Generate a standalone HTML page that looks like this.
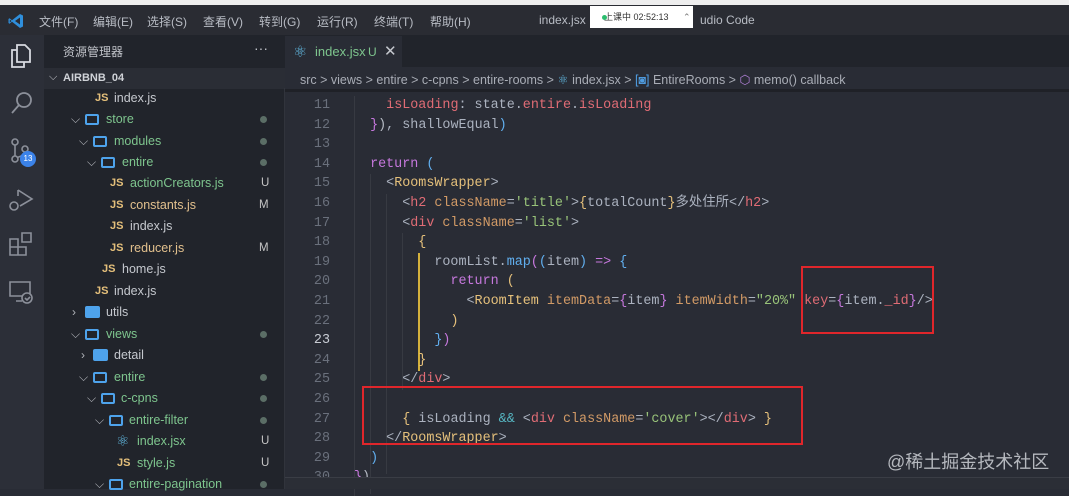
<!DOCTYPE html>
<html><head><meta charset="utf-8"><style>
*{margin:0;padding:0;box-sizing:border-box}
body{width:1069px;height:489px;overflow:hidden;background:#292c35;font-family:"Liberation Sans","Noto Sans CJK SC",sans-serif;position:relative}
.a{position:absolute;white-space:nowrap}
#top{left:0;top:0;width:1069px;height:6px;background:#eeeeee}
#title{left:0;top:5px;width:1069px;height:30px;background:#2a2c33;color:#b8bcc4;font-size:12px}
#act{left:0;top:35px;width:44px;height:454px;background:#2c2f38}
#side{left:44px;top:35px;width:241px;height:454px;background:#21242b;font-size:12.5px;color:#c5c8ce}
#tabs{left:285px;top:35px;width:784px;height:32px;background:#21242b}
#tab{left:285px;top:36px;width:117px;height:32px;background:#292c35}
#crumb{left:285px;top:67px;width:784px;height:22px;background:#292c35;color:#a9adb6;font-size:12.5px}
.r{position:absolute;left:0;height:21px;line-height:21px;font-size:12.5px}
.g{color:#7ec58e}.m{color:#e2c08d}
.js{color:#e5c07b;font-weight:bold;font-size:11px;position:absolute}
.fold{position:absolute;width:14px;height:11px;border:2px solid #4ea3ec;border-radius:2px}
.foldc{position:absolute;width:15px;height:12px;background:#4ea3ec;border-radius:2px}
.chev{position:absolute;color:#b0b3b9;font-size:12px}
.dot{position:absolute;left:260px;top:7px;width:7px;height:7px;border-radius:50%;background:#5b6e66}
.bd{position:absolute;left:216px;font-size:11.5px;color:#c5c5c5}
#code{left:285px;top:96px;font-family:"Liberation Mono","Noto Sans CJK SC",monospace;font-size:13.4px}
.l{position:absolute;left:0;height:19.6px;line-height:19.6px;white-space:pre}
.n{position:absolute;width:45px;text-align:right;color:#6a707c;left:0}
.c{position:absolute;left:69px;color:#abb2bf}
.p{color:#e06c75}.k{color:#c678dd}.y{color:#e5c07b}.o{color:#d19a66}.s{color:#98c379}.b{color:#61afef}.q{color:#56b6c2}.w{color:#b7bcc6}
.box{position:absolute;border:2.5px solid #e0262b}
</style></head><body>
<div class="a" id="top"></div>
<div class="a" id="title">
 <svg class="a" style="left:8px;top:8px" width="16" height="16" viewBox="0 0 16 16"><path d="M12 1 L15 2.5 V13.5 L12 15 L4 8.8 L1.5 10.8 L0.5 10 V6 L1.5 5.2 L4 7.2Z M12 4.5 L7 8 L12 11.5Z M1.8 6.5V9.5L3.5 8Z" fill="#2f8fdc" fill-rule="evenodd"/></svg>
 <span class="a" style="left:39px;top:8px">文件(F)</span>
 <span class="a" style="left:93px;top:8px">编辑(E)</span>
 <span class="a" style="left:147px;top:8px">选择(S)</span>
 <span class="a" style="left:203px;top:8px">查看(V)</span>
 <span class="a" style="left:259px;top:8px">转到(G)</span>
 <span class="a" style="left:317px;top:8px">运行(R)</span>
 <span class="a" style="left:374px;top:8px">终端(T)</span>
 <span class="a" style="left:430px;top:8px">帮助(H)</span>
 <span class="a" style="left:539px;top:8px">index.jsx</span>
 <span class="a" style="left:700px;top:8px">udio Code</span>
 <div class="a" style="left:590px;top:1px;width:103px;height:22px;background:#fff;color:#333;font-size:9px;line-height:22px;padding-left:14px">上课中 02:52:13 <span style="margin-left:12px;color:#777">⌃</span></div>
 <div class="a" style="left:602px;top:10px;width:5px;height:5px;border-radius:50%;background:#2bbd6e"></div>
</div>
<div class="a" id="act">
 <svg class="a" style="left:9px;top:8px" width="24" height="26" viewBox="0 0 24 26" fill="none" stroke="#d7dae0" stroke-width="1.8"><path d="M8 2h8l5 5v12H8z"/><path d="M8 7H3v17h12v-5"/></svg>
 <svg class="a" style="left:10px;top:56px" width="24" height="24" viewBox="0 0 24 24" fill="none" stroke="#8c909a" stroke-width="1.8"><circle cx="14" cy="9" r="7"/><path d="M9 14L2 22"/></svg>
 <svg class="a" style="left:9px;top:102px" width="26" height="28" viewBox="0 0 26 28" fill="none" stroke="#8c909a" stroke-width="1.6"><circle cx="6" cy="5" r="3"/><circle cx="6" cy="22" r="3"/><circle cx="16" cy="12" r="3"/><path d="M6 8v11M16 15c0 4-6 4-8 6"/></svg>
 <div class="a" style="left:20px;top:116px;width:16px;height:16px;border-radius:50%;background:#3b82e8;color:#fff;font-size:8px;text-align:center;line-height:16px">13</div>
 <svg class="a" style="left:8px;top:152px" width="26" height="26" viewBox="0 0 26 26" fill="none" stroke="#8c909a" stroke-width="1.6"><path d="M10 3v6M10 3l14 9-12 7"/><circle cx="6" cy="19" r="4"/></svg>
 <svg class="a" style="left:8px;top:196px" width="26" height="26" viewBox="0 0 26 26" fill="none" stroke="#8c909a" stroke-width="1.6"><path d="M2 8h8v8H2zM2 16h8v8H2zM10 16h8v8h-8zM14 2h9v9h-9z"/></svg>
 <svg class="a" style="left:8px;top:244px" width="26" height="26" viewBox="0 0 26 26" fill="none" stroke="#8c909a" stroke-width="1.6"><path d="M2 3h20v14H2zM8 22h6"/><circle cx="19" cy="19" r="5" fill="#2c2f38"/><path d="M17 19l2 2 3-3"/></svg>
</div>
<div class="a" id="side">
 <span class="a" style="left:19px;top:8px;font-size:12px;color:#c0c3c9">资源管理器</span>
 <span class="a" style="left:210px;top:5px;font-size:14px;color:#c0c3c9">···</span>
 <div class="a" style="left:0;top:33px;width:241px;height:21px;background:#2a2d35"></div>
 <span class="a" style="left:5px;top:36px;font-size:11px;color:#c5c8ce">⌵</span>
 <span class="a" style="left:19px;top:37px;font-size:11px;font-weight:bold;color:#d0d3d8">AIRBNB_04</span>
</div>
<div class="a" style="left:0;top:87px;width:285px;height:402px;font-size:12.5px;color:#c5c8ce">
 <div class="r" style="top:1px;width:285px"><span class="js" style="left:95px;top:0">JS</span><span class="a" style="left:114px">index.js</span></div>
 <div class="r" style="top:22px;width:285px"><span class="chev" style="left:71px">⌵</span><span class="fold" style="left:85px;top:5px"></span><span class="a g" style="left:106px">store</span><span class="dot"></span></div>
 <div class="r" style="top:44px;width:285px"><span class="chev" style="left:79px">⌵</span><span class="fold" style="left:93px;top:5px"></span><span class="a g" style="left:114px">modules</span><span class="dot"></span></div>
 <div class="r" style="top:65px;width:285px"><span class="chev" style="left:87px">⌵</span><span class="fold" style="left:101px;top:5px"></span><span class="a g" style="left:122px">entire</span><span class="dot"></span></div>
 <div class="r" style="top:86px;width:285px"><span class="js" style="left:110px">JS</span><span class="a g" style="left:130px">actionCreators.js</span><span class="bd" style="left:261px" >U</span></div>
 <div class="r" style="top:108px;width:285px"><span class="js" style="left:110px">JS</span><span class="a m" style="left:130px">constants.js</span><span class="bd m" style="left:259px">M</span></div>
 <div class="r" style="top:129px;width:285px"><span class="js" style="left:110px">JS</span><span class="a" style="left:130px">index.js</span></div>
 <div class="r" style="top:151px;width:285px"><span class="js" style="left:110px">JS</span><span class="a m" style="left:130px">reducer.js</span><span class="bd m" style="left:259px">M</span></div>
 <div class="r" style="top:172px;width:285px"><span class="js" style="left:102px">JS</span><span class="a" style="left:122px">home.js</span></div>
 <div class="r" style="top:194px;width:285px"><span class="js" style="left:95px">JS</span><span class="a" style="left:114px">index.js</span></div>
 <div class="r" style="top:215px;width:285px"><span class="chev" style="left:72px">›</span><span class="foldc" style="left:85px;top:4px"></span><span class="a" style="left:106px">utils</span></div>
 <div class="r" style="top:237px;width:285px"><span class="chev" style="left:71px">⌵</span><span class="fold" style="left:85px;top:5px"></span><span class="a g" style="left:106px">views</span><span class="dot"></span></div>
 <div class="r" style="top:258px;width:285px"><span class="chev" style="left:81px">›</span><span class="foldc" style="left:93px;top:4px"></span><span class="a" style="left:114px">detail</span></div>
 <div class="r" style="top:280px;width:285px"><span class="chev" style="left:79px">⌵</span><span class="fold" style="left:93px;top:5px"></span><span class="a g" style="left:114px">entire</span><span class="dot"></span></div>
 <div class="r" style="top:301px;width:285px"><span class="chev" style="left:87px">⌵</span><span class="fold" style="left:101px;top:5px"></span><span class="a g" style="left:121px">c-cpns</span><span class="dot"></span></div>
 <div class="r" style="top:323px;width:285px"><span class="chev" style="left:95px">⌵</span><span class="fold" style="left:109px;top:5px"></span><span class="a g" style="left:129px">entire-filter</span><span class="dot"></span></div>
 <div class="r" style="top:344px;width:285px"><span class="a" style="left:116px;color:#61b8e0;font-size:15px">⚛</span><span class="a g" style="left:137px">index.jsx</span><span class="bd" style="left:261px">U</span></div>
 <div class="r" style="top:366px;width:285px"><span class="js" style="left:117px">JS</span><span class="a g" style="left:137px">style.js</span><span class="bd" style="left:261px">U</span></div>
 <div class="r" style="top:387px;width:285px"><span class="chev" style="left:95px">⌵</span><span class="fold" style="left:109px;top:5px"></span><span class="a g" style="left:129px">entire-pagination</span><span class="dot"></span></div>
</div>
<div class="a" style="left:284px;top:88px;width:1px;height:401px;background:#31343c"></div>
<div class="a" id="tabs"></div>
<div class="a" id="tab">
 <span class="a" style="left:8px;top:6px;color:#61b8e0;font-size:16px">⚛</span>
 <span class="a g" style="left:30px;top:8px;font-size:13px">index.jsx</span>
 <span class="a g" style="left:83px;top:9px;font-size:12px">U</span>
 <span class="a" style="left:99px;top:6px;font-size:15px;color:#c5c8ce">✕</span>
</div>
<div class="a" id="crumb">
 <span class="a" style="left:15px;top:5px">src &gt; views &gt; entire &gt; c-cpns &gt; entire-rooms &gt; <span style="color:#61b8e0">⚛</span> index.jsx &gt; <span style="color:#4f9ce0">[◙]</span> EntireRooms &gt; <span style="color:#b180d7">⬡</span> memo() callback</span>
</div>
<div class="a" id="code">
 <div class="a" style="left:69px;top:0;width:1px;height:400px;background:#373a42"></div>
 <div class="a" style="left:85px;top:78px;width:1px;height:320px;background:#373a42"></div>
 <div class="a" style="left:101px;top:98px;width:1px;height:280px;background:#373a42"></div>
 <div class="a" style="left:117px;top:137px;width:1px;height:157px;background:#373a42"></div>
 <div class="a" style="left:133px;top:157px;width:2px;height:118px;background:#d4b13c"></div>
 <div class="l" style="top:0"><span class="n">11</span><span class="c">    <span class="p">isLoading</span>: state.<span class="p">entire</span>.<span class="p">isLoading</span></span></div>
 <div class="l" style="top:19.6px"><span class="n">12</span><span class="c">  <span class="k">}</span><span class="w">)</span>, shallowEqual<span class="b">)</span></span></div>
 <div class="l" style="top:39.2px"><span class="n">13</span></div>
 <div class="l" style="top:58.8px"><span class="n">14</span><span class="c">  <span class="k">return</span> <span class="b">(</span></span></div>
 <div class="l" style="top:78.4px"><span class="n">15</span><span class="c">    &lt;<span class="y">RoomsWrapper</span>&gt;</span></div>
 <div class="l" style="top:98px"><span class="n">16</span><span class="c">      &lt;<span class="p">h2</span> <span class="o">className</span>=<span class="s">'title'</span>&gt;<span class="y">{</span>totalCount<span class="y">}</span>多处住所&lt;/<span class="p">h2</span>&gt;</span></div>
 <div class="l" style="top:117.6px"><span class="n">17</span><span class="c">      &lt;<span class="p">div</span> <span class="o">className</span>=<span class="s">'list'</span>&gt;</span></div>
 <div class="l" style="top:137.2px"><span class="n">18</span><span class="c">        <span class="y">{</span></span></div>
 <div class="l" style="top:156.8px"><span class="n">19</span><span class="c">          roomList.<span class="b">map</span><span class="k">(</span><span class="b">(</span>item<span class="b">)</span> <span class="k">=&gt;</span> <span class="b">{</span></span></div>
 <div class="l" style="top:176.4px"><span class="n">20</span><span class="c">            <span class="k">return</span> <span class="y">(</span></span></div>
 <div class="l" style="top:196px"><span class="n">21</span><span class="c">              &lt;<span class="y">RoomItem</span> <span class="o">itemData</span>=<span class="k">{</span>item<span class="k">}</span> <span class="o">itemWidth</span>=<span class="s">"20%"</span> <span class="p">key</span>=<span class="k">{</span>item.<span class="p">_id</span><span class="k">}</span>/&gt;</span></div>
 <div class="l" style="top:215.6px"><span class="n">22</span><span class="c">            <span class="y">)</span></span></div>
 <div class="l" style="top:235.2px"><span class="n" style="color:#c8ccd4">23</span><span class="c">          <span class="b">}</span><span class="k">)</span></span></div>
 <div class="l" style="top:254.8px"><span class="n">24</span><span class="c">        <span class="y">}</span></span></div>
 <div class="l" style="top:274.4px"><span class="n">25</span><span class="c">      &lt;/<span class="p">div</span>&gt;</span></div>
 <div class="l" style="top:294px"><span class="n">26</span></div>
 <div class="l" style="top:313.6px"><span class="n">27</span><span class="c">      <span class="y">{</span> isLoading <span class="q">&amp;&amp;</span> &lt;<span class="p">div</span> <span class="o">className</span>=<span class="s">'cover'</span>&gt;&lt;/<span class="p">div</span>&gt; <span class="y">}</span></span></div>
 <div class="l" style="top:333.2px"><span class="n">28</span><span class="c">    &lt;/<span class="y">RoomsWrapper</span>&gt;</span></div>
 <div class="l" style="top:352.8px"><span class="n">29</span><span class="c">  <span class="b">)</span></span></div>
 <div class="l" style="top:372.4px"><span class="n">30</span><span class="c"><span class="k">}</span><span class="w">)</span></span></div>
</div>
<div class="a" style="left:285px;top:89px;width:784px;height:3px;background:#1f2127"></div>
<div class="a" style="left:285px;top:477px;width:784px;height:12px;background:#2b2e36;border-top:1px solid #3a3d45"></div>
<div class="box" style="left:801px;top:266px;width:133px;height:68px"></div>
<div class="box" style="left:362px;top:386px;width:441px;height:59px"></div>
<span class="a" style="left:887px;top:448px;font-size:18px;color:#b5b8be">@稀土掘金技术社区</span>
</body></html>
